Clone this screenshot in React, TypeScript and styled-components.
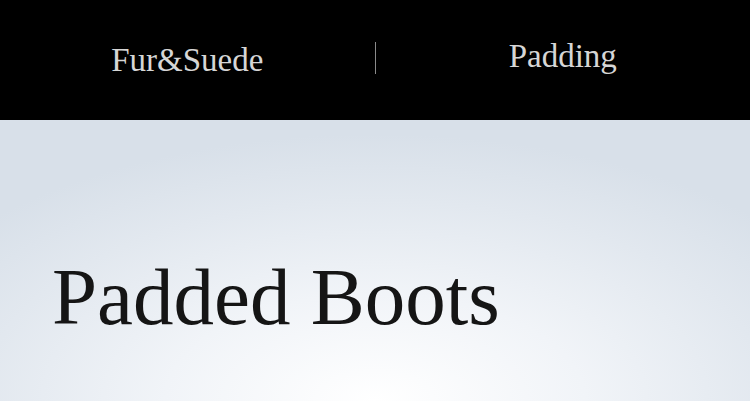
import React from 'react'
import styled, { createGlobalStyle } from 'styled-components'

const Global = createGlobalStyle`
	html, body {
		margin: 0;
		padding: 0;
		height: 100%;
		overflow: hidden;
	}
	#root {
		height: 100%;
	}
`

const Page = styled.div`
	display: flex;
	flex-direction: column;
	height: 100vh;
	font-family: "Liberation Serif", "DejaVu Serif", serif;
`

const TopBar = styled.nav`
	display: flex;
	align-items: flex-start;
	height: 120px;
	background: #000;
	flex-shrink: 0;
`

const Tab = styled.a<{ $top: number }>`
	flex: 1;
	text-align: center;
	padding-top: ${p => p.$top}px;
	font-size: 33px;
	line-height: 1;
	color: #d6d6d6;
	text-decoration: none;
	cursor: pointer;
`

const Divider = styled.span`
	width: 1px;
	height: 32px;
	margin-top: 42px;
	background: #8a8a8a;
`

const Hero = styled.main`
	flex: 1;
	padding: 137px 0 0 52px;
	background: radial-gradient(ellipse 70% 95% at 50% 100%, #ffffff 0%, #f1f4f8 40%, #e2e8ef 75%, #d8e0e9 100%);
`

const Title = styled.h1`
	margin: 0;
	font-size: 81px;
	font-weight: normal;
	line-height: 1;
	color: #151515;
`

export default function App() {
	return (
		<Page>
			<Global />
			<TopBar>
				<Tab $top={44}>Fur&amp;Suede</Tab>
				<Divider />
				<Tab $top={40}>Padding</Tab>
			</TopBar>
			<Hero>
				<Title>Padded Boots</Title>
			</Hero>
		</Page>
	)
}
